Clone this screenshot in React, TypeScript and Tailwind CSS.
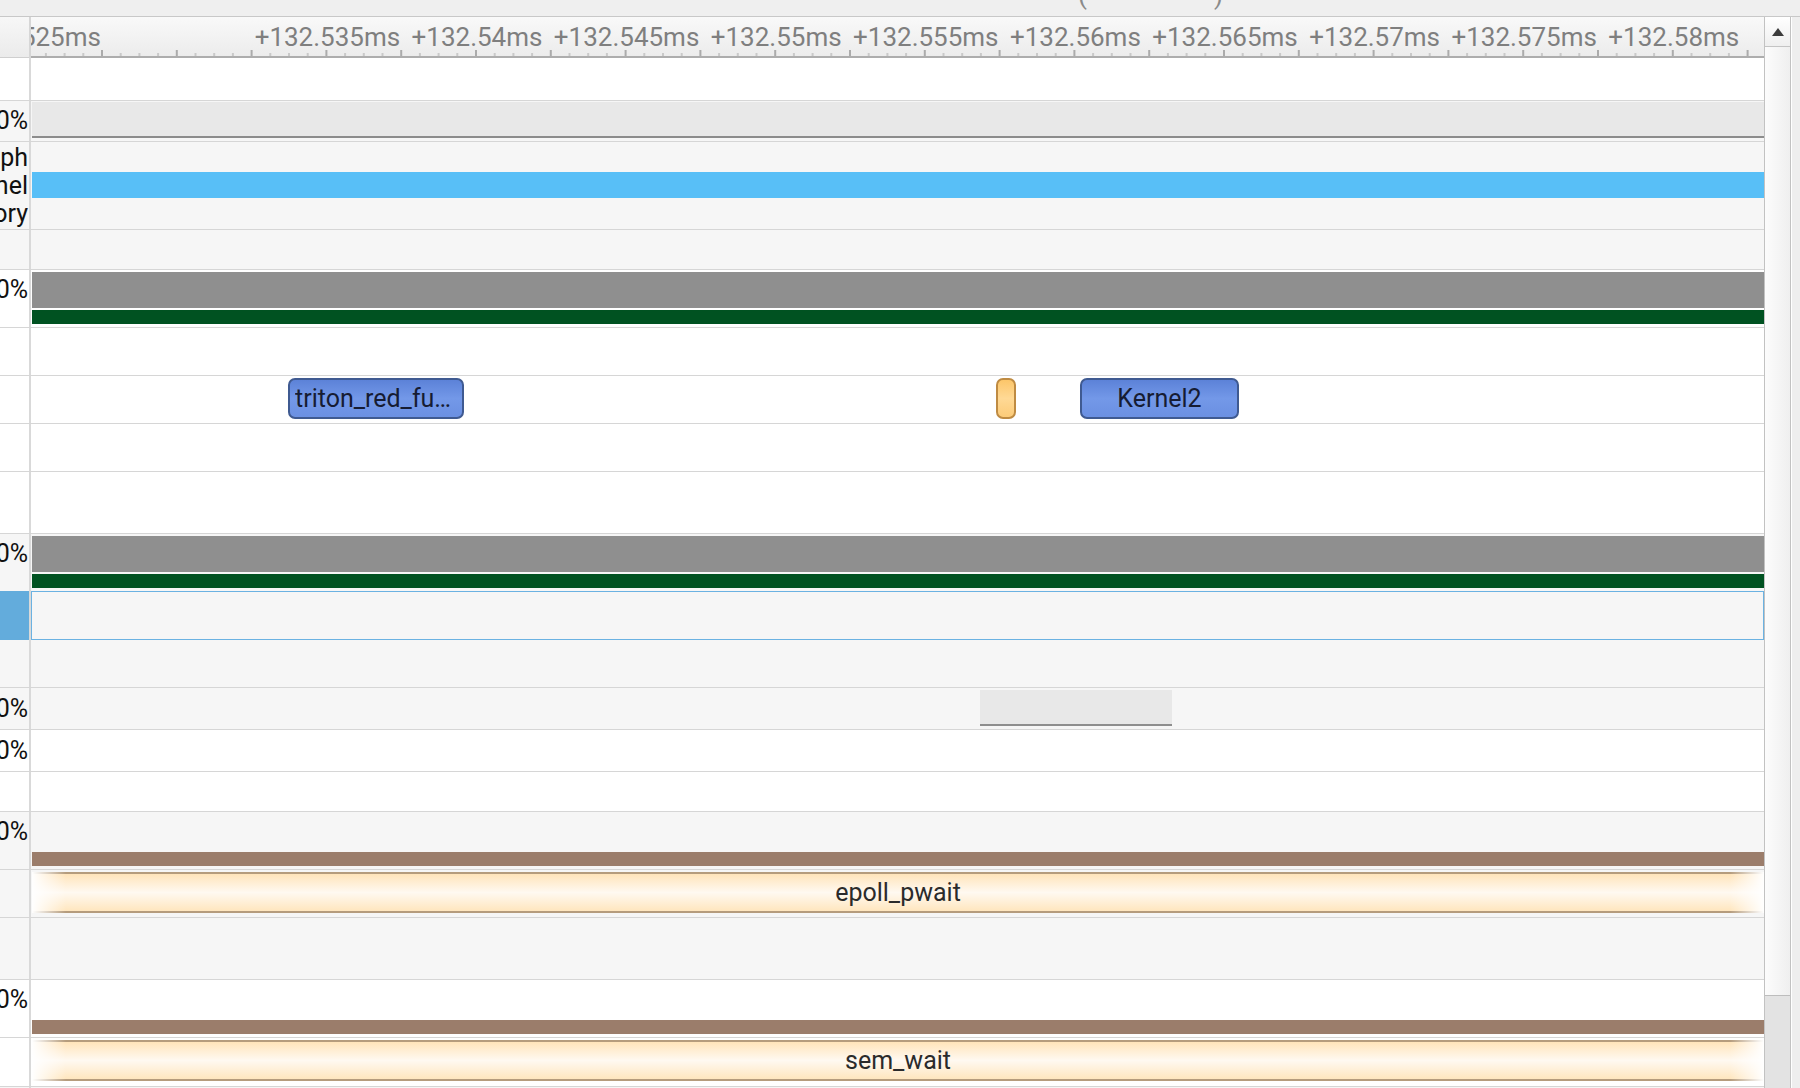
import React from 'react';

// time axis: first major tick (px from the left of the track area) and tick pitch
const TICK0 = 71;
const MAJOR = 74.8;

const tickX = (k: number) => TICK0 + MAJOR * k;

const axisLabels = [
  { k: -1, text: '+132.525ms' },
  { k: 3, text: '+132.535ms' },
  { k: 5, text: '+132.54ms' },
  { k: 7, text: '+132.545ms' },
  { k: 9, text: '+132.55ms' },
  { k: 11, text: '+132.555ms' },
  { k: 13, text: '+132.56ms' },
  { k: 15, text: '+132.565ms' },
  { k: 17, text: '+132.57ms' },
  { k: 19, text: '+132.575ms' },
  { k: 21, text: '+132.58ms' },
];

const TimeAxis: React.FC = () => (
  <div className="flex h-[41px] shrink-0">
    <div className="w-[29px] bg-gradient-to-b from-[#f7f7f7] to-[#ebebeb] border-b border-[#cfcfcf]" />
    <div className="w-[2px] bg-[#d6d6d6]" />
    <div className="relative flex-1 overflow-hidden bg-gradient-to-b from-[#f9f9f9] to-[#ececec] border-b-2 border-[#adadad]">
      {axisLabels.map((l) => (
        <span
          key={l.text}
          className="absolute top-[5px] -translate-x-1/2 whitespace-nowrap text-[26px] leading-[30px] text-[#7f7f7f]"
          style={{ left: tickX(l.k) + 1 }}
        >
          {l.text}
        </span>
      ))}
      <svg className="absolute bottom-0 left-0 h-[6px] w-full">
        {Array.from({ length: 24 }, (_, i) => i - 1).map((k) => (
          <g key={k}>
            <rect x={tickX(k) - 1} y={0} width={2} height={6} fill="#ababab" />
            {[1, 2, 3].map((m) => (
              <rect key={m} x={tickX(k) + (MAJOR / 4) * m - 1} y={3} width={2} height={3} fill="#c9c9c9" />
            ))}
          </g>
        ))}
      </svg>
    </div>
  </div>
);

type RowProps = {
  h: string;
  bg: string;
  label?: React.ReactNode;
  labelClass?: string;
  border?: boolean;
  children?: React.ReactNode;
};

const Row: React.FC<RowProps> = ({ h, bg, label, labelClass = 'items-center', border = true, children }) => (
  <div className={`flex shrink-0 ${h} ${bg} ${border ? 'border-b border-[#d6d6d6]' : ''}`}>
    <div className={`flex w-[29px] justify-end overflow-hidden pr-[1px] text-[25px] leading-[28px] text-[#111] ${labelClass}`}>
      {label && <span className="shrink-0 whitespace-nowrap">{label}</span>}
    </div>
    <div className="w-[2px] bg-[#d9d9d9]" />
    <div className="relative flex-1">{children}</div>
  </div>
);

const CounterBars: React.FC = () => (
  <div className="flex flex-col gap-[2px] pl-[1px] pt-[2px]">
    <div className="h-[36px] bg-[#8f8f8f]" />
    <div className="h-[14px] bg-[#005221]" />
  </div>
);

const Slice: React.FC<{ left: number; width: number; children?: React.ReactNode; tone: 'blue' | 'amber' }> = ({
  left,
  width,
  children,
  tone,
}) => (
  <div
    className={`absolute top-[2px] flex h-[41px] items-center justify-center overflow-hidden rounded-[7px] border-2 px-[5px] text-[25px] ${
      tone === 'blue'
        ? 'border-[#3f5a91] bg-gradient-to-b from-[#5c82d8] via-[#7398e8] to-[#6b90e2] text-[#161c33]'
        : 'border-[#bf8b42] bg-gradient-to-b from-[#fcc669] via-[#ffd995] to-[#fccb78]'
    }`}
    style={{ left, width }}
  >
    {children && <span className="truncate">{children}</span>}
  </div>
);

const WaitSlice: React.FC<{ name: string }> = ({ name }) => (
  <div className="relative ml-[1px] mt-[2px] flex h-[41px] items-center justify-center border-y-2 border-[#b59c7d] bg-gradient-to-b from-[#ffe4ba] via-[#fff9f1] to-[#ffe6be] text-[25px] text-[#2b2b2b]">
    {name}
    <div className="absolute -top-[2px] -bottom-[2px] left-0 w-[34px] bg-gradient-to-r from-white to-transparent" />
    <div className="absolute -top-[2px] -bottom-[2px] right-0 w-[34px] bg-gradient-to-l from-white to-transparent" />
  </div>
);

const Scrollbar: React.FC = () => (
  <div className="flex w-[36px] shrink-0 bg-[#eeeeee]">
    <div className="flex w-[27px] flex-col border-l border-r border-[#c2c2c2]">
      <div className="flex h-[30px] items-center justify-center border-b border-[#c4c4c4] bg-gradient-to-b from-white to-[#efefef]">
        <svg width="14" height="10" viewBox="0 0 14 10">
          <path d="M7 1 L13 9 L1 9 Z" fill="#3c3c3c" />
        </svg>
      </div>
      <div className="flex-1 bg-gradient-to-r from-[#fcfcfc] to-[#efefef]" />
      <div className="h-[93px] border-t border-[#bdbdbd] bg-[#e3e3e3]" />
    </div>
    <div className="w-[1px] bg-white" />
  </div>
);

export default function App() {
  return (
    <div className="flex h-[1088px] w-[1800px] flex-col overflow-hidden bg-[#efefef] font-['Roboto',sans-serif]">
      <div className="relative h-[17px] shrink-0 overflow-hidden border-b border-[#c8c8c8] bg-[#efefef] text-[26px] text-[#8a8a8a]">
        <span className="absolute left-[1078px] top-[-24px]">(</span>
        <span className="absolute left-[1214px] top-[-24px]">)</span>
      </div>
      <div className="flex min-h-0 flex-1">
        <div className="flex w-[1764px] flex-col overflow-hidden bg-[#f5f5f5]">
          <TimeAxis />

          <Row h="h-[43px]" bg="bg-white" />

          <Row h="h-[41px]" bg="bg-[#f6f6f6]" label="CPU 0%">
            <div className="ml-[1px] mt-[1px] h-[36px] border-b-2 border-[#8c8c8c] bg-[#e8e8e8]" />
          </Row>

          <Row
            h="h-[88px]"
            bg="bg-[#f6f6f6]"
            label={
              <span className="flex flex-col items-end">
                <span>CUDA Graph</span>
                <span>Kernel</span>
                <span>Memory</span>
              </span>
            }
          >
            <div className="ml-[1px] mt-[30px] h-[26px] bg-[#58bff7]" />
          </Row>

          <Row h="h-[40px]" bg="bg-[#f6f6f6]" />

          <Row h="h-[58px]" bg="bg-white" label="GPU 0%" labelClass="items-start pt-[6px]">
            <CounterBars />
          </Row>

          <Row h="h-[48px]" bg="bg-white" />

          <Row h="h-[48px]" bg="bg-white">
            <Slice left={257} width={176} tone="blue">
              triton_red_fused_add_mean_0
            </Slice>
            <Slice left={965} width={20} tone="amber" />
            <Slice left={1049} width={159} tone="blue">
              Kernel2
            </Slice>
          </Row>

          <Row h="h-[48px]" bg="bg-white" />
          <Row h="h-[62px]" bg="bg-white" />

          <Row h="h-[57px]" bg="bg-[#f6f6f6]" label="GPU 0%" labelClass="items-start pt-[6px]" border={false}>
            <CounterBars />
          </Row>

          {/* selected track */}
          <div className="flex h-[49px] shrink-0 bg-[#f6f6f6]">
            <div className="w-[29px] bg-[#63acdc]" />
            <div className="w-[2px] bg-[#d9d9d9]" />
            <div className="flex-1 border border-[#6bb2e2]" />
          </div>

          <Row h="h-[48px]" bg="bg-[#f6f6f6]" />

          <Row h="h-[42px]" bg="bg-[#f6f6f6]" label="Mem 0%">
            <div className="absolute left-[949px] top-[2px] h-[36px] w-[192px] border-b-2 border-[#8e8e8e] bg-[#e8e8e8]" />
          </Row>

          <Row h="h-[42px]" bg="bg-white" label="Net 0%" />
          <Row h="h-[40px]" bg="bg-white" />

          <Row h="h-[58px]" bg="bg-[#f6f6f6]" label="Thread 0%" labelClass="items-start pt-[6px]">
            <div className="ml-[1px] mt-[40px] h-[14px] bg-[#9b7d6b]" />
          </Row>

          <Row h="h-[48px]" bg="bg-[#f6f6f6]">
            <WaitSlice name="epoll_pwait" />
          </Row>

          <Row h="h-[62px]" bg="bg-[#f6f6f6]" />

          <Row h="h-[58px]" bg="bg-white" label="Thread 0%" labelClass="items-start pt-[6px]">
            <div className="ml-[1px] mt-[40px] h-[14px] bg-[#9b7d6b]" />
          </Row>

          <Row h="h-[49px]" bg="bg-white">
            <WaitSlice name="sem_wait" />
          </Row>

          <Row h="h-[40px]" bg="bg-[#f6f6f6]" border={false} />
        </div>
        <Scrollbar />
      </div>
    </div>
  );
}
